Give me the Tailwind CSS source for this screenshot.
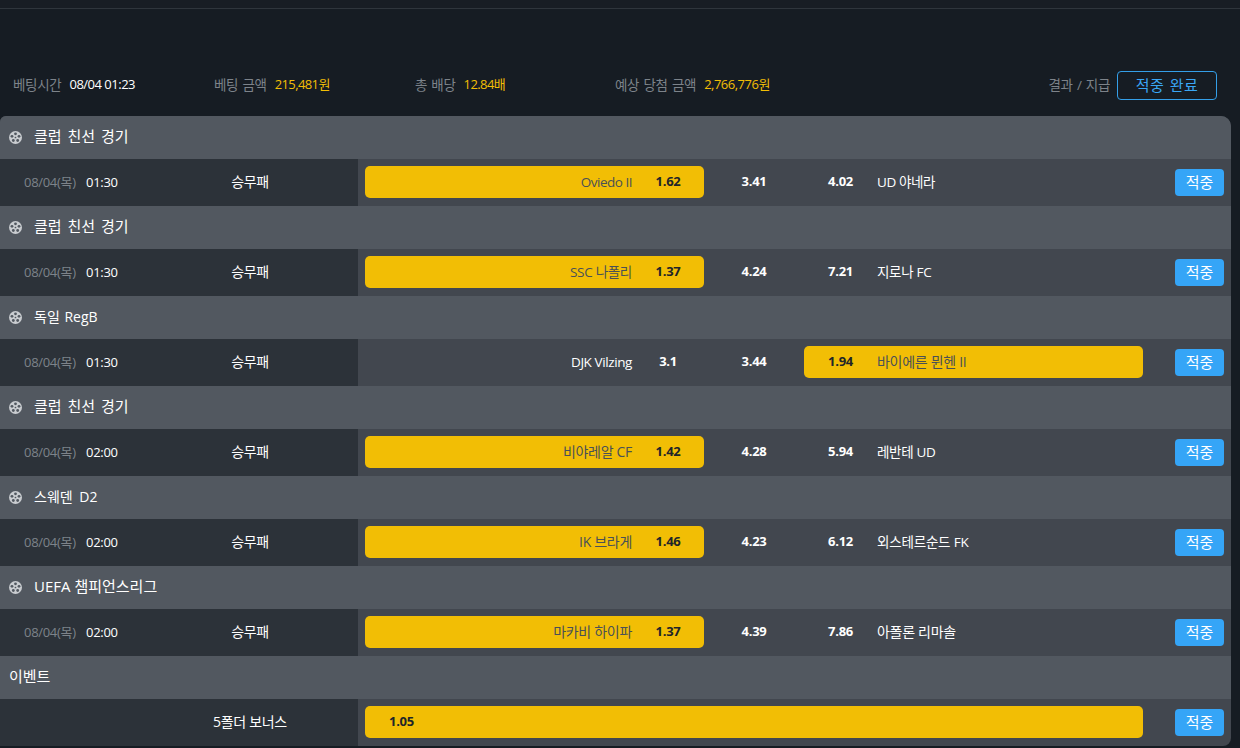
<!DOCTYPE html>
<html lang="ko">
<head>
    <meta charset="UTF-8">
    <title>Bet history</title>
    <script src="https://cdn.jsdelivr.net/npm/@tailwindcss/browser@4"></script>
</head>
<body class="bg-[#161c23] h-[748px] w-[1240px] overflow-hidden font-['Open_Sans','Noto_Sans_CJK_KR',sans-serif] text-[13px] tracking-[-0.3px]">

    <!-- Top line -->
    <div class="h-[9px] border-b border-[#2f353c] bg-[#181d24]"></div>

    <!-- Bet summary -->
    <div class="flex items-center h-[107px] pt-[45px] pl-[13px] pr-[23px]">
        <div class="w-[201px] flex gap-2 items-center">
            <span class="text-[#7d838a] text-[13.5px] [word-spacing:1px]">베팅시간</span><span class="text-white tracking-[-0.5px]">08/04 01:23</span>
        </div>
        <div class="w-[201px] flex gap-2 items-center">
            <span class="text-[#7d838a] text-[13.5px] [word-spacing:1px]">베팅 금액</span><span class="text-[#f2be05] tracking-[-0.6px]">215,481원</span>
        </div>
        <div class="w-[200px] flex gap-2 items-center">
            <span class="text-[#7d838a] text-[13.5px] [word-spacing:1px]">총 배당</span><span class="text-[#f2be05] tracking-[-0.6px]">12.84배</span>
        </div>
        <div class="flex gap-2 items-center">
            <span class="text-[#7d838a] text-[13.5px] [word-spacing:1px]">예상 당첨 금액</span><span class="text-[#f2be05] tracking-[-0.5px]">2,766,776원</span>
        </div>
        <div class="ml-auto flex gap-[7px] items-center">
            <span class="text-[#7d838a] text-[13.5px] [word-spacing:1px]">결과 / 지급</span>
            <div class="w-[100px] h-[29px] flex items-center justify-center rounded border border-[#349fe8] text-[#3aa6f5] text-[15px] tracking-[0.5px] [word-spacing:1px]">적중 완료</div>
        </div>
    </div>

    <!-- Bets table -->
    <div class="w-[1231px] h-[630px] rounded-tr-[10px] rounded-tl-[6px] rounded-br-[8px] overflow-hidden bg-[#42474f]">

        <!-- 1 -->
        <div class="h-[43px] pb-[3px] bg-[#525860] flex items-center gap-[12px] pl-[9px] text-white text-[15px] tracking-normal [word-spacing:2px]">
            <svg class="w-[13px] h-[13px] mt-[3px]" viewBox="0 0 24 24"><circle cx="12" cy="12" r="12" fill="#c9ccd0"/><circle cx="12" cy="12" r="1.6" fill="#525860"/><circle cx="12" cy="5.2" r="2.6" fill="#525860"/><circle cx="5.5" cy="9.9" r="2.6" fill="#525860"/><circle cx="18.5" cy="9.9" r="2.6" fill="#525860"/><circle cx="8" cy="17.5" r="2.6" fill="#525860"/><circle cx="16" cy="17.5" r="2.6" fill="#525860"/></svg>
            <span>클럽 친선 경기</span>
        </div>
        <div class="h-[47px] flex items-start">
            <div class="w-[358px] h-full bg-[#2c3239] flex items-center pl-6 shrink-0">
                <span class="w-[62px] text-[#7d838a]">08/04(목)</span><span class="w-[129px] text-white">01:30</span><span class="w-[70px] text-center text-white text-sm pb-px">승무패</span>
            </div>
            <div class="w-[339px] h-8 ml-[7px] mt-[7px] rounded-[5px] bg-[#f2be05] flex items-center justify-end text-[#495057]"><span class="text-[13.5px] tracking-[-0.5px]">Oviedo II</span><span class="w-[72px] text-center font-bold text-[#212529]">1.62</span></div>
            <div class="w-[100px] h-[46px] flex items-center justify-center font-bold text-white">3.41</div>
            <div class="w-[339px] h-8 mt-[7px] flex items-center text-white"><span class="w-[73px] text-center font-bold">4.02</span><span class="text-[13.5px] tracking-[-0.4px]">UD 야네라</span></div>
            <div class="ml-[32px] mt-[10px] w-[49px] h-[27px] rounded bg-[#35a5f7] flex items-center justify-center text-white text-[15px] tracking-normal">적중</div>
        </div>

        <!-- 2 -->
        <div class="h-[43px] pb-[3px] bg-[#525860] flex items-center gap-[12px] pl-[9px] text-white text-[15px] tracking-normal [word-spacing:2px]">
            <svg class="w-[13px] h-[13px] mt-[3px]" viewBox="0 0 24 24"><circle cx="12" cy="12" r="12" fill="#c9ccd0"/><circle cx="12" cy="12" r="1.6" fill="#525860"/><circle cx="12" cy="5.2" r="2.6" fill="#525860"/><circle cx="5.5" cy="9.9" r="2.6" fill="#525860"/><circle cx="18.5" cy="9.9" r="2.6" fill="#525860"/><circle cx="8" cy="17.5" r="2.6" fill="#525860"/><circle cx="16" cy="17.5" r="2.6" fill="#525860"/></svg>
            <span>클럽 친선 경기</span>
        </div>
        <div class="h-[47px] flex items-start">
            <div class="w-[358px] h-full bg-[#2c3239] flex items-center pl-6 shrink-0">
                <span class="w-[62px] text-[#7d838a]">08/04(목)</span><span class="w-[129px] text-white">01:30</span><span class="w-[70px] text-center text-white text-sm pb-px">승무패</span>
            </div>
            <div class="w-[339px] h-8 ml-[7px] mt-[7px] rounded-[5px] bg-[#f2be05] flex items-center justify-end text-[#495057]"><span class="text-[13.5px]">SSC 나폴리</span><span class="w-[72px] text-center font-bold text-[#212529]">1.37</span></div>
            <div class="w-[100px] h-[46px] flex items-center justify-center font-bold text-white">4.24</div>
            <div class="w-[339px] h-8 mt-[7px] flex items-center text-white"><span class="w-[73px] text-center font-bold">7.21</span><span class="text-[13.5px]">지로나 FC</span></div>
            <div class="ml-[32px] mt-[10px] w-[49px] h-[27px] rounded bg-[#35a5f7] flex items-center justify-center text-white text-[15px] tracking-normal">적중</div>
        </div>

        <!-- 3 -->
        <div class="h-[43px] pb-[3px] bg-[#525860] flex items-center gap-[12px] pl-[9px] text-white text-[15px] tracking-normal [word-spacing:2px]">
            <svg class="w-[13px] h-[13px] mt-[3px]" viewBox="0 0 24 24"><circle cx="12" cy="12" r="12" fill="#c9ccd0"/><circle cx="12" cy="12" r="1.6" fill="#525860"/><circle cx="12" cy="5.2" r="2.6" fill="#525860"/><circle cx="5.5" cy="9.9" r="2.6" fill="#525860"/><circle cx="18.5" cy="9.9" r="2.6" fill="#525860"/><circle cx="8" cy="17.5" r="2.6" fill="#525860"/><circle cx="16" cy="17.5" r="2.6" fill="#525860"/></svg>
            <span class="text-sm [word-spacing:1px] mt-px">독일 RegB</span>
        </div>
        <div class="h-[47px] flex items-start">
            <div class="w-[358px] h-full bg-[#2c3239] flex items-center pl-6 shrink-0">
                <span class="w-[62px] text-[#7d838a]">08/04(목)</span><span class="w-[129px] text-white">01:30</span><span class="w-[70px] text-center text-white text-sm pb-px">승무패</span>
            </div>
            <div class="w-[339px] h-8 ml-[7px] mt-[7px] flex items-center justify-end text-white"><span class="text-[13.5px] tracking-[-0.4px]">DJK Vilzing</span><span class="w-[72px] text-center font-bold">3.1</span></div>
            <div class="w-[100px] h-[46px] flex items-center justify-center font-bold text-white">3.44</div>
            <div class="w-[339px] h-8 mt-[7px] rounded-[5px] bg-[#f2be05] flex items-center text-[#495057]"><span class="w-[73px] text-center font-bold text-[#212529]">1.94</span><span class="text-sm">바이에른 뮌헨 II</span></div>
            <div class="ml-[32px] mt-[10px] w-[49px] h-[27px] rounded bg-[#35a5f7] flex items-center justify-center text-white text-[15px] tracking-normal">적중</div>
        </div>

        <!-- 4 -->
        <div class="h-[43px] pb-[3px] bg-[#525860] flex items-center gap-[12px] pl-[9px] text-white text-[15px] tracking-normal [word-spacing:2px]">
            <svg class="w-[13px] h-[13px] mt-[3px]" viewBox="0 0 24 24"><circle cx="12" cy="12" r="12" fill="#c9ccd0"/><circle cx="12" cy="12" r="1.6" fill="#525860"/><circle cx="12" cy="5.2" r="2.6" fill="#525860"/><circle cx="5.5" cy="9.9" r="2.6" fill="#525860"/><circle cx="18.5" cy="9.9" r="2.6" fill="#525860"/><circle cx="8" cy="17.5" r="2.6" fill="#525860"/><circle cx="16" cy="17.5" r="2.6" fill="#525860"/></svg>
            <span>클럽 친선 경기</span>
        </div>
        <div class="h-[47px] flex items-start">
            <div class="w-[358px] h-full bg-[#2c3239] flex items-center pl-6 shrink-0">
                <span class="w-[62px] text-[#7d838a]">08/04(목)</span><span class="w-[129px] text-white">02:00</span><span class="w-[70px] text-center text-white text-sm pb-px">승무패</span>
            </div>
            <div class="w-[339px] h-8 ml-[7px] mt-[7px] rounded-[5px] bg-[#f2be05] flex items-center justify-end text-[#495057]"><span class="text-sm">비야레알 CF</span><span class="w-[72px] text-center font-bold text-[#212529]">1.42</span></div>
            <div class="w-[100px] h-[46px] flex items-center justify-center font-bold text-white">4.28</div>
            <div class="w-[339px] h-8 mt-[7px] flex items-center text-white"><span class="w-[73px] text-center font-bold">5.94</span><span class="text-[13.5px]">레반테 UD</span></div>
            <div class="ml-[32px] mt-[10px] w-[49px] h-[27px] rounded bg-[#35a5f7] flex items-center justify-center text-white text-[15px] tracking-normal">적중</div>
        </div>

        <!-- 5 -->
        <div class="h-[43px] pb-[3px] bg-[#525860] flex items-center gap-[12px] pl-[9px] text-white text-[15px] tracking-normal [word-spacing:2px]">
            <svg class="w-[13px] h-[13px] mt-[3px]" viewBox="0 0 24 24"><circle cx="12" cy="12" r="12" fill="#c9ccd0"/><circle cx="12" cy="12" r="1.6" fill="#525860"/><circle cx="12" cy="5.2" r="2.6" fill="#525860"/><circle cx="5.5" cy="9.9" r="2.6" fill="#525860"/><circle cx="18.5" cy="9.9" r="2.6" fill="#525860"/><circle cx="8" cy="17.5" r="2.6" fill="#525860"/><circle cx="16" cy="17.5" r="2.6" fill="#525860"/></svg>
            <span class="text-sm [word-spacing:3px] mt-px">스웨덴 D2</span>
        </div>
        <div class="h-[47px] flex items-start">
            <div class="w-[358px] h-full bg-[#2c3239] flex items-center pl-6 shrink-0">
                <span class="w-[62px] text-[#7d838a]">08/04(목)</span><span class="w-[129px] text-white">02:00</span><span class="w-[70px] text-center text-white text-sm pb-px">승무패</span>
            </div>
            <div class="w-[339px] h-8 ml-[7px] mt-[7px] rounded-[5px] bg-[#f2be05] flex items-center justify-end text-[#495057]"><span class="text-sm">IK 브라게</span><span class="w-[72px] text-center font-bold text-[#212529]">1.46</span></div>
            <div class="w-[100px] h-[46px] flex items-center justify-center font-bold text-white">4.23</div>
            <div class="w-[339px] h-8 mt-[7px] flex items-center text-white"><span class="w-[73px] text-center font-bold">6.12</span><span class="text-[13.5px] tracking-[-0.2px]">외스테르순드 FK</span></div>
            <div class="ml-[32px] mt-[10px] w-[49px] h-[27px] rounded bg-[#35a5f7] flex items-center justify-center text-white text-[15px] tracking-normal">적중</div>
        </div>

        <!-- 6 -->
        <div class="h-[43px] pb-[3px] bg-[#525860] flex items-center gap-[12px] pl-[9px] text-white text-[15px] tracking-normal">
            <svg class="w-[13px] h-[13px] mt-[3px]" viewBox="0 0 24 24"><circle cx="12" cy="12" r="12" fill="#c9ccd0"/><circle cx="12" cy="12" r="1.6" fill="#525860"/><circle cx="12" cy="5.2" r="2.6" fill="#525860"/><circle cx="5.5" cy="9.9" r="2.6" fill="#525860"/><circle cx="18.5" cy="9.9" r="2.6" fill="#525860"/><circle cx="8" cy="17.5" r="2.6" fill="#525860"/><circle cx="16" cy="17.5" r="2.6" fill="#525860"/></svg>
            <span>UEFA 챔피언스리그</span>
        </div>
        <div class="h-[47px] flex items-start">
            <div class="w-[358px] h-full bg-[#2c3239] flex items-center pl-6 shrink-0">
                <span class="w-[62px] text-[#7d838a]">08/04(목)</span><span class="w-[129px] text-white">02:00</span><span class="w-[70px] text-center text-white text-sm pb-px">승무패</span>
            </div>
            <div class="w-[339px] h-8 ml-[7px] mt-[7px] rounded-[5px] bg-[#f2be05] flex items-center justify-end text-[#495057]"><span class="text-sm">마카비 하이파</span><span class="w-[72px] text-center font-bold text-[#212529]">1.37</span></div>
            <div class="w-[100px] h-[46px] flex items-center justify-center font-bold text-white">4.39</div>
            <div class="w-[339px] h-8 mt-[7px] flex items-center text-white"><span class="w-[73px] text-center font-bold">7.86</span><span class="text-sm">아폴론 리마솔</span></div>
            <div class="ml-[32px] mt-[10px] w-[49px] h-[27px] rounded bg-[#35a5f7] flex items-center justify-center text-white text-[15px] tracking-normal">적중</div>
        </div>

        <!-- Event -->
        <div class="h-[43px] pb-[3px] bg-[#525860] flex items-center pl-[9px] text-white text-[15px] tracking-normal">
            <span>이벤트</span>
        </div>
        <div class="h-[47px] flex items-start">
            <div class="w-[358px] h-full bg-[#2c3239] flex items-center shrink-0 text-white">
                <span class="w-[213px]"></span><span class="text-sm pb-px">5폴더 보너스</span>
            </div>
            <div class="w-[778px] h-8 ml-[7px] mt-[7px] rounded-[5px] bg-[#f2be05] flex items-center font-bold text-[#212529] pl-6">1.05</div>
            <div class="ml-[32px] mt-[10px] w-[49px] h-[27px] rounded bg-[#35a5f7] flex items-center justify-center text-white text-[15px] tracking-normal">적중</div>
        </div>
    </div>

</body>
</html>
